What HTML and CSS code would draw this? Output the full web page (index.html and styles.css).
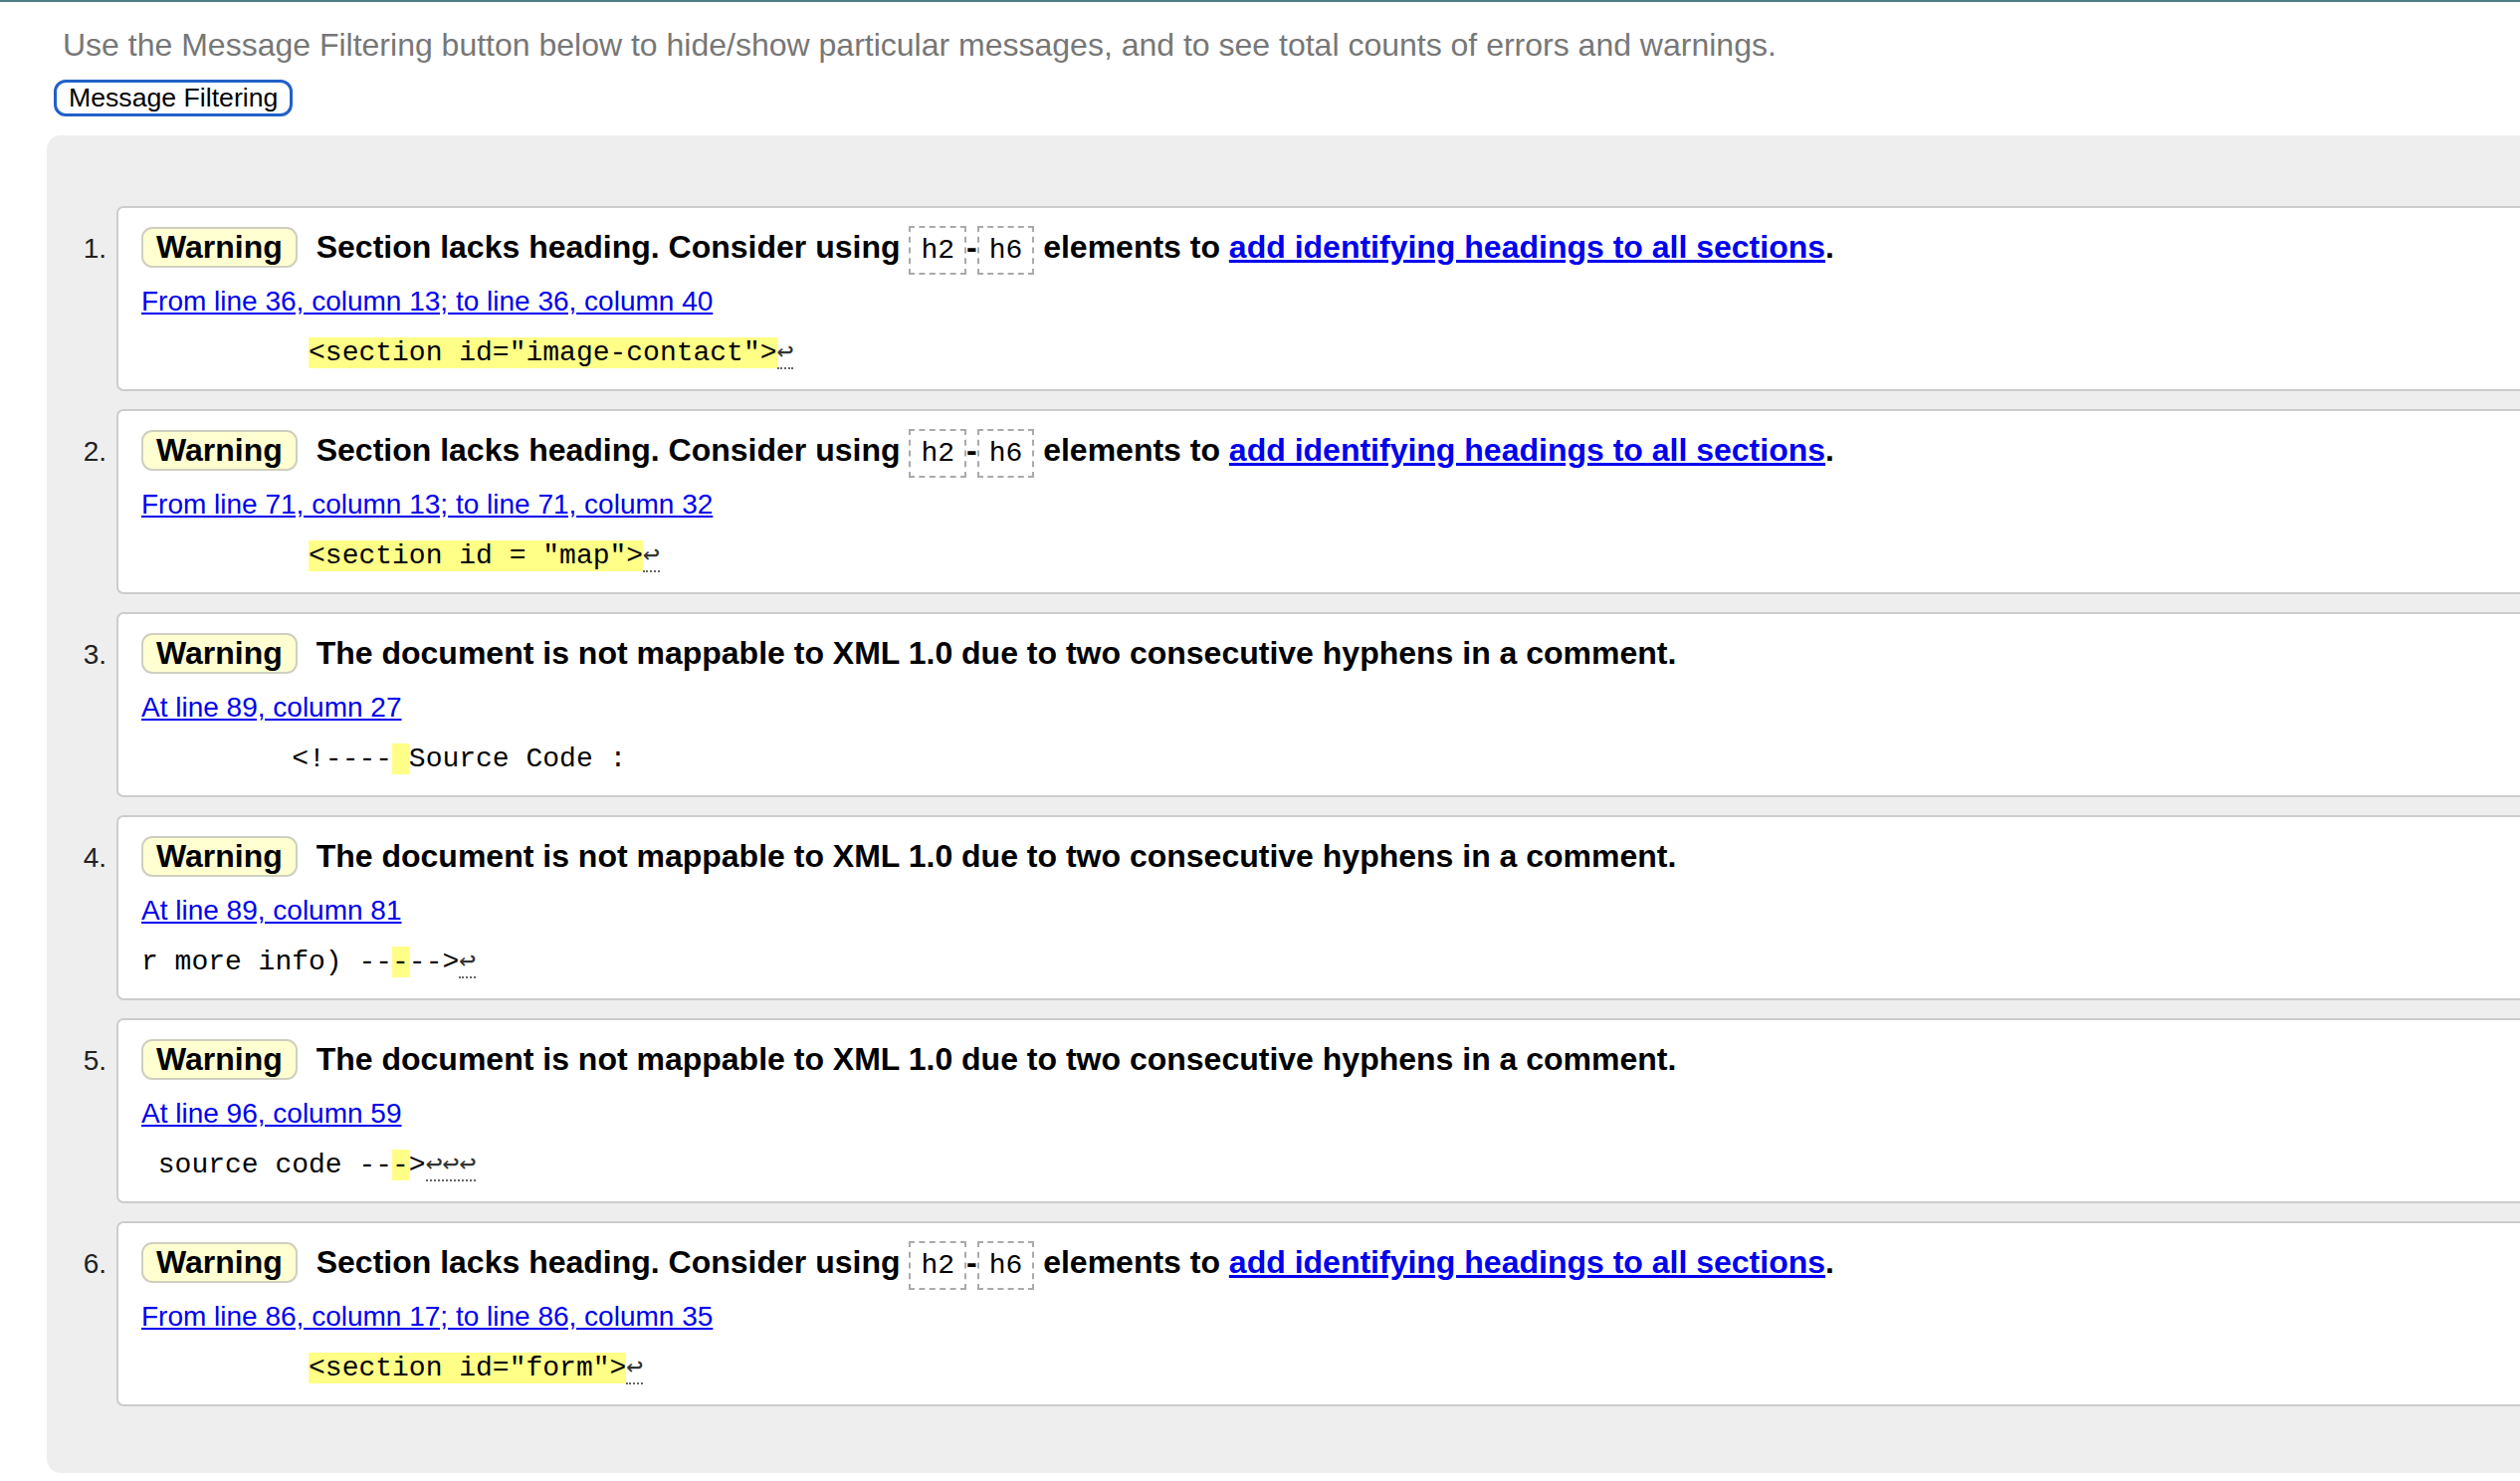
FILE: index.html
```
<!DOCTYPE html>
<html lang="en">
<head>
<meta charset="utf-8">
<title>Validator messages</title>
<link rel="stylesheet" href="styles.css">
</head>
<body>
<div class="page">
  <p class="intro">Use the Message Filtering button below to hide/show particular messages, and to see total counts of errors and warnings.</p>
  <button class="filter-btn" type="button">Message Filtering</button>
  <ol class="results">
    <li class="msg">
      <span class="num">1.</span>
      <div class="card">
        <p class="msg-line"><span class="badge">Warning</span> <span class="msg-text">Section lacks heading. Consider using <code class="tag">h2</code>-<code class="tag">h6</code> elements to <a href="#">add identifying headings to all sections</a>.</span></p>
        <p class="loc"><a href="#">From line 36, column 13; to line 36, column 40</a></p>
        <pre class="extract">          <b>&lt;section id="image-contact"&gt;</b><span class="lf">↩</span></pre>
      </div>
    </li>
    <li class="msg">
      <span class="num">2.</span>
      <div class="card">
        <p class="msg-line"><span class="badge">Warning</span> <span class="msg-text">Section lacks heading. Consider using <code class="tag">h2</code>-<code class="tag">h6</code> elements to <a href="#">add identifying headings to all sections</a>.</span></p>
        <p class="loc"><a href="#">From line 71, column 13; to line 71, column 32</a></p>
        <pre class="extract">          <b>&lt;section id = "map"&gt;</b><span class="lf">↩</span></pre>
      </div>
    </li>
    <li class="msg">
      <span class="num">3.</span>
      <div class="card">
        <p class="msg-line"><span class="badge">Warning</span> <span class="msg-text">The document is not mappable to XML 1.0 due to two consecutive hyphens in a comment.</span></p>
        <p class="loc"><a href="#">At line 89, column 27</a></p>
        <pre class="extract">         &lt;!----<b> </b>Source Code :</pre>
      </div>
    </li>
    <li class="msg">
      <span class="num">4.</span>
      <div class="card">
        <p class="msg-line"><span class="badge">Warning</span> <span class="msg-text">The document is not mappable to XML 1.0 due to two consecutive hyphens in a comment.</span></p>
        <p class="loc"><a href="#">At line 89, column 81</a></p>
        <pre class="extract">r more info) --<b>-</b>--&gt;<span class="lf">↩</span></pre>
      </div>
    </li>
    <li class="msg">
      <span class="num">5.</span>
      <div class="card">
        <p class="msg-line"><span class="badge">Warning</span> <span class="msg-text">The document is not mappable to XML 1.0 due to two consecutive hyphens in a comment.</span></p>
        <p class="loc"><a href="#">At line 96, column 59</a></p>
        <pre class="extract"> source code --<b>-</b>&gt;<span class="lf">↩↩↩</span></pre>
      </div>
    </li>
    <li class="msg">
      <span class="num">6.</span>
      <div class="card">
        <p class="msg-line"><span class="badge">Warning</span> <span class="msg-text">Section lacks heading. Consider using <code class="tag">h2</code>-<code class="tag">h6</code> elements to <a href="#">add identifying headings to all sections</a>.</span></p>
        <p class="loc"><a href="#">From line 86, column 17; to line 86, column 35</a></p>
        <pre class="extract">          <b>&lt;section id="form"&gt;</b><span class="lf">↩</span></pre>
      </div>
    </li>
  </ol>
</div>
</body>
</html>
```

FILE: styles.css
```
html, body {
  margin: 0;
  padding: 0;
  background: #ffffff;
  overflow: hidden;
}

body {
  font-family: "Liberation Sans", Arial, Helvetica, sans-serif;
  color: #000;
  border-top: 2px solid #4b7d83;
}

.page {
  display: flex;
  flex-direction: column;
  align-items: flex-start;
}

.intro {
  margin: 25px 0 0 63px;
  font-size: 32px;
  line-height: normal;
  color: #777777;
  white-space: nowrap;
}

.filter-btn {
  margin: 16px 0 0 54px;
  height: 37px;
  padding: 0 12px;
  border: 3px solid #2161c8;
  border-radius: 12px;
  background: #ffffff;
  color: #000;
  font-family: "Liberation Sans", Arial, Helvetica, sans-serif;
  font-size: 26.67px;
  line-height: 31px;
}

.results {
  list-style: none;
  margin: 19px -300px 8px 47px;
  padding: 71px 0 67px 0;
  align-self: stretch;
  background: #eeeeee;
  border-radius: 14px 0 0 14px;
}

.msg {
  display: flex;
  align-items: baseline;
  gap: 10px;
  margin-bottom: 18px;
}

.msg:last-child {
  margin-bottom: 0;
}

.num {
  flex: none;
  width: 60px;
  text-align: right;
  font-size: 28px;
  color: #222;
}

.card {
  flex: 1;
  min-width: 0;
  background: #ffffff;
  border: 2px solid #cccccc;
  border-radius: 7px;
  padding: 19px 24px 20px 23px;
}

.msg-line {
  margin: 0 0 18px 0;
  font-size: 32px;
  font-weight: bold;
  line-height: 41px;
  white-space: nowrap;
}

.badge {
  display: inline-block;
  line-height: 35px;
  padding: 1px 13px 1px 13px;
  border: 2px solid #cfcfc0;
  border-radius: 11px;
  background: #ffffd2;
  margin-right: 10px;
}

.tag {
  font-family: "Liberation Mono", "Courier New", monospace;
  font-weight: normal;
  font-size: 28px;
  line-height: 28px;
  padding: 7px 10px;
  border: 2px dashed #aaaaaa;
}

a {
  color: #0000ee;
  text-decoration: underline;
}

.loc {
  margin: 0 0 20px 0;
  font-size: 28px;
  line-height: 32px;
  white-space: nowrap;
}

.extract {
  margin: 0;
  font-family: "Liberation Mono", "Courier New", monospace;
  font-size: 28px;
  line-height: 32px;
  color: #000;
}

.extract b {
  font-weight: normal;
  background: #ffff88;
}

.lf {
  font-family: "DejaVu Sans Mono", monospace;
  font-size: 28px;
  line-height: 0;
  color: #333;
  border-bottom: 2px dotted #666;
}
```
